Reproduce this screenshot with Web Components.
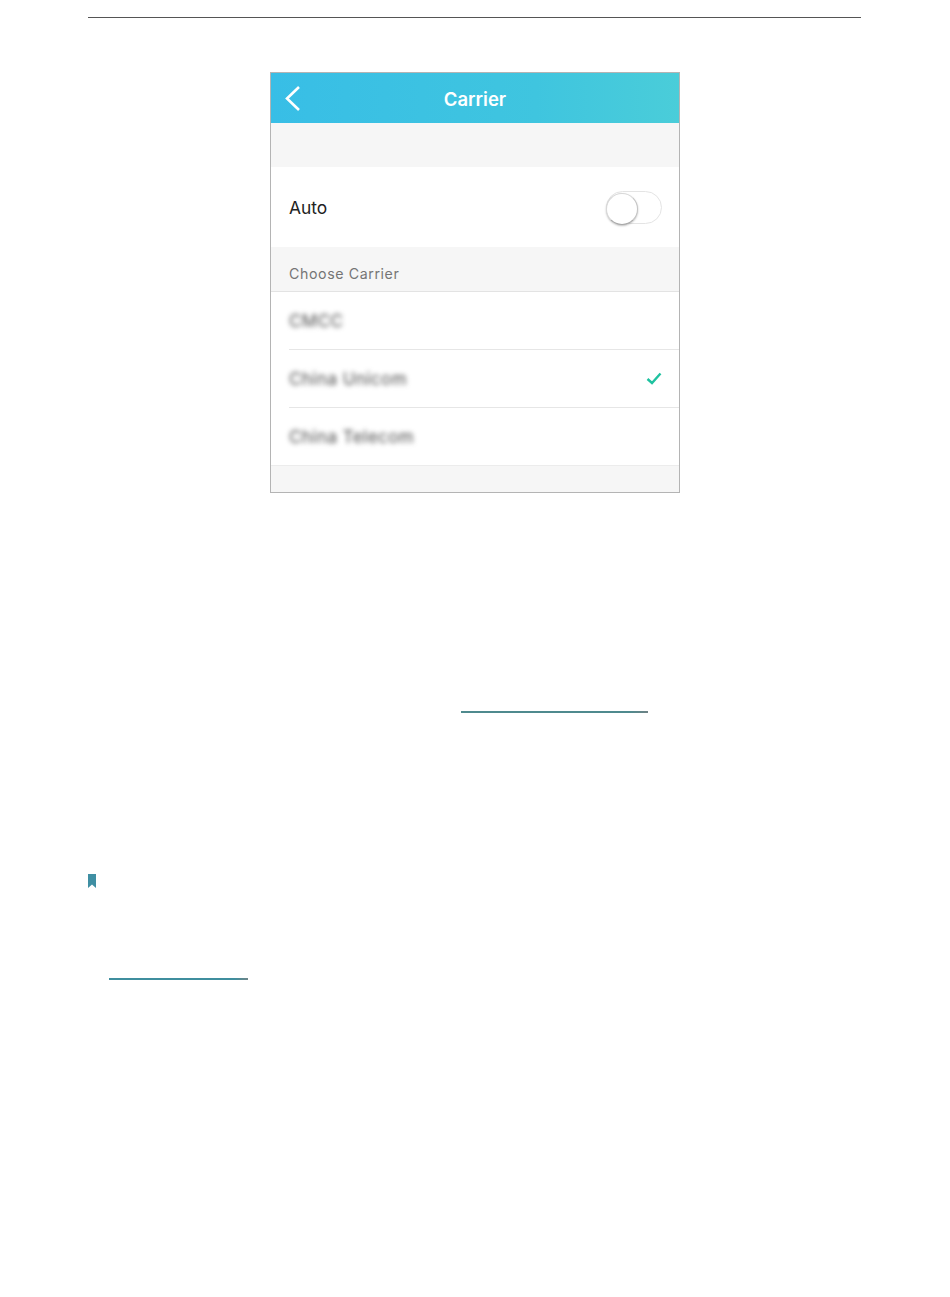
<!DOCTYPE html>
<html>
<head>
<meta charset="utf-8">
<title>Carrier</title>
<style>
  html, body { margin: 0; background: #fff; }
  body { font-family: "Liberation Sans", Arial, sans-serif; }
</style>
</head>
<body>
<manual-page>
  <carrier-screen title="Carrier">
    <setting-row label="Auto" slot="auto"><toggle-switch></toggle-switch></setting-row>
    <carrier-option name="CMCC"></carrier-option>
    <carrier-option name="China Unicom" checked></carrier-option>
    <carrier-option name="China Telecom" last></carrier-option>
  </carrier-screen>
</manual-page>

<script>
class ManualPage extends HTMLElement {
  constructor() {
    super();
    const shadow = this.attachShadow({ mode: 'open' });
    shadow.innerHTML = `
      <style>
        :host {
          display: block;
          width: 950px;
          height: 1297px;
          box-sizing: border-box;
          padding: 17px 90px 0 88px;
          background: #fff;
        }
        .rule { height: 1px; background: #555; margin-right: -1px; }
        .figure { display: flex; justify-content: center; margin: 54px 0 0 2px; }
        .link { height: 2px; background: linear-gradient(90deg, #4f8a8e 90%, #6f8285); }
        .link-one { width: 187px; margin: 218px 0 0 373px; }
        .note { width: 8px; height: 14px; margin-top: 161px; display: block; }
        .link-two { width: 139px; margin: 90px 0 0 21px; background: linear-gradient(90deg, #3f8e9e 90%, #6f8588); }
      </style>
      <div class="rule"></div>
      <div class="figure"><slot></slot></div>
      <div class="link link-one"></div>
      <svg class="note" viewBox="0 0 8 14"><path d="M0 0H8V14L4 10.5L0 14Z" fill="#3f8fa3"/></svg>
      <div class="link link-two"></div>
    `;
  }
}

class CarrierScreen extends HTMLElement {
  constructor() {
    super();
    const shadow = this.attachShadow({ mode: 'open' });
    shadow.innerHTML = `
      <style>
        :host {
          display: block;
          width: 410px;
          box-sizing: border-box;
          border: 1px solid #b4b4b4;
          background: #f6f6f6;
          font-family: "Inter", "Liberation Sans", sans-serif;
        }
        header {
          height: 50px;
          box-sizing: border-box;
          padding-top: 2px;
          display: flex;
          align-items: center;
          justify-content: center;
          position: relative;
          background: linear-gradient(90deg, #38bee6 0%, #3fc5df 65%, #4acdd9 100%);
          color: #fff;
          font-size: 18.5px;
          font-weight: 600;
        }
        header svg { position: absolute; left: 13px; top: 12px; }
        .gap { height: 44px; }
        .heading {
          height: 45px;
          box-sizing: border-box;
          padding: 18px 0 0 18px;
          font-size: 14.2px;
          line-height: 17px;
          letter-spacing: 0.6px;
          color: #757575;
          border-bottom: 1px solid #e3e3e3;
        }
        .list { background: #fff; border-bottom: 1px solid #ececec; }
        .foot { height: 26px; }
      </style>
      <header>
        <svg width="18" height="27" viewBox="0 0 18 27" fill="none"><path d="M15 2L3 13.5L15 25" stroke="#fff" stroke-width="2.6"/></svg>
        <span id="title"></span>
      </header>
      <div class="gap"></div>
      <slot name="auto"></slot>
      <div class="heading">Choose Carrier</div>
      <div class="list"><slot></slot></div>
      <div class="foot"></div>
    `;
    shadow.getElementById('title').textContent = this.getAttribute('title');
  }
}

class SettingRow extends HTMLElement {
  constructor() {
    super();
    const shadow = this.attachShadow({ mode: 'open' });
    shadow.innerHTML = `
      <style>
        :host {
          display: flex;
          height: 80px;
          align-items: center;
          justify-content: space-between;
          padding: 0 17px 0 18px;
          background: #fff;
          color: #222;
          font-size: 17.4px;
        }
      </style>
      <span id="label"></span>
      <slot></slot>
    `;
    shadow.getElementById('label').textContent = this.getAttribute('label');
  }
}

class ToggleSwitch extends HTMLElement {
  constructor() {
    super();
    const shadow = this.attachShadow({ mode: 'open' });
    shadow.innerHTML = `
      <style>
        :host {
          display: block;
          position: relative;
          width: 56px;
          height: 33px;
          box-sizing: border-box;
          border: 1px solid #e4e4e4;
          border-radius: 17px;
          background: #fff;
        }
        .knob {
          position: absolute;
          left: -1px;
          top: 1px;
          width: 32px;
          height: 32px;
          box-sizing: border-box;
          border-radius: 50%;
          background: #fff;
          border: 1px solid #d8d8d8;
          border-bottom-color: #a8a8a8;
          border-right-color: #c4c4c4;
          box-shadow: 0 1px 2px rgba(0, 0, 0, 0.25);
        }
      </style>
      <div class="knob"></div>
    `;
  }
}

class CarrierOption extends HTMLElement {
  constructor() {
    super();
    const shadow = this.attachShadow({ mode: 'open' });
    shadow.innerHTML = `
      <style>
        :host { display: block; padding-left: 18px; background: #fff; }
        .row {
          height: 57px;
          display: flex;
          align-items: center;
          justify-content: space-between;
          padding-right: 17px;
          border-bottom: 1px solid #e6e6e6;
        }
        :host([last]) .row { border-bottom: 0; }
        .name {
          font-size: 17px;
          letter-spacing: 0.45px;
          color: #4a4a4a;
          filter: blur(2.4px);
        }
        svg { display: none; }
        :host([checked]) svg { display: block; }
      </style>
      <div class="row">
        <span class="name" id="name"></span>
        <svg width="16" height="13" viewBox="0 0 16 13" fill="none"><path d="M1.5 7L6 11L14.5 1.5" stroke="#1fc2a0" stroke-width="2.4"/></svg>
      </div>
    `;
    shadow.getElementById('name').textContent = this.getAttribute('name');
  }
}

customElements.define('manual-page', ManualPage);
customElements.define('carrier-screen', CarrierScreen);
customElements.define('setting-row', SettingRow);
customElements.define('toggle-switch', ToggleSwitch);
customElements.define('carrier-option', CarrierOption);
</script>
</body>
</html>
